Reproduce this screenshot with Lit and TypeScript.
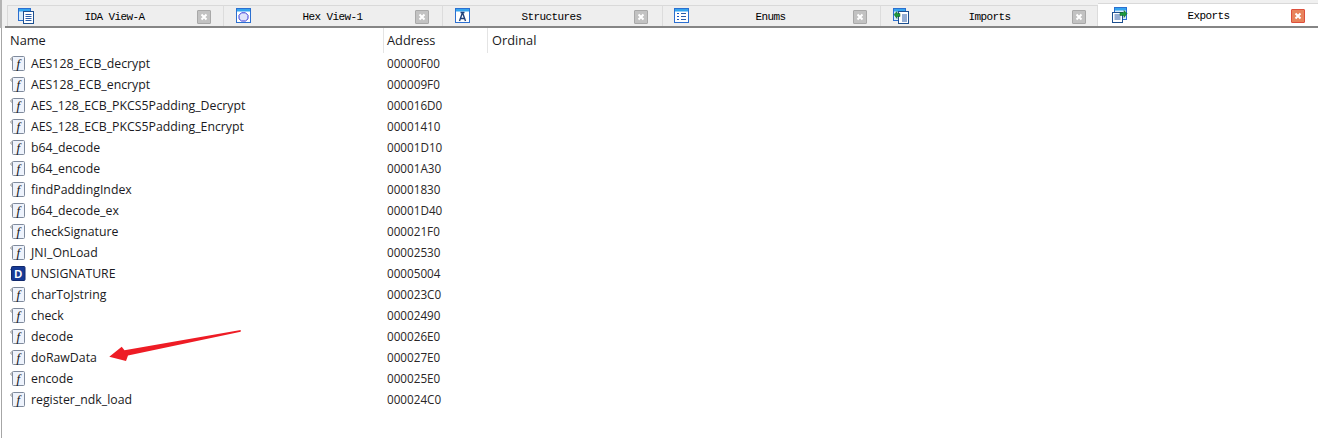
import { LitElement, html, css, svg } from "lit";
import { customElement } from "lit/decorators.js";

const winFrame = svg`
  <rect x="0.5" y="0.5" width="14" height="14" fill="#fff" stroke="#2b6fd0"/>
  <rect x="1" y="1" width="13" height="2.5" fill="#35a4ee"/>`;

const tabIcons = [
  svg`<rect x="0.5" y="0.5" width="12" height="12" fill="#d8ecfb" stroke="#2b6fd0"/>
      <rect x="1" y="1" width="11" height="2.5" fill="#35a4ee"/>
      <rect x="5.5" y="3.5" width="10" height="12" fill="#fff" stroke="#1d4f8f"/>
      <path d="M7.5 6.5h6M7.5 8.5h6M7.500 10.500h6M7.500 12.500h6" stroke="#2a5da8" fill="none"/>`,
  svg`${winFrame}<path d="M5.500 4.800h4l2.500 2.500v3.500l-2.500 2.200h-4L3 10.800V7.300z" fill="#dfe4fb" stroke="#3a3ad8"/>`,
  svg`${winFrame}<path d="M5.500 4.500h4M7.500 4.500L4.500 13M7.500 4.500L10.500 13M5.500 10.500h4" stroke="#1d3f78" stroke-width="1.400" fill="none"/>`,
  svg`${winFrame}<path d="M3 5.500h2M3 8.500h2M3 11.500h2" stroke="#1d55c0" fill="none"/><path d="M7 5.500h5M7 8.500h5M7 11.500h5" stroke="#2a5da8" fill="none"/>`,
  svg`<rect x="0.500" y="0.500" width="12" height="12" fill="#d8ecfb" stroke="#2b6fd0"/>
      <rect x="1" y="1" width="11" height="2.500" fill="#35a4ee"/>
      <rect x="5.500" y="3.500" width="10" height="12" fill="#fff" stroke="#1d4f8f"/>
      <path d="M9 7h5M9 9h5M9 11h5M9 13h5" stroke="#2a5da8" fill="none"/>
      <path d="M1 6.500l3-3v2h3v3H4v2z" fill="#1e9a3c" stroke="#0a5a1c" stroke-width="0.500"/>`,
  svg`<rect x="2.500" y="0.500" width="12" height="12" fill="#d8ecfb" stroke="#2b6fd0"/>
      <rect x="3" y="1" width="11" height="2.500" fill="#35a4ee"/>
      <rect x="0.500" y="5.500" width="10" height="10" fill="#fff" stroke="#1d4f8f"/>
      <path d="M2.500 8h6M2.500 10h6M2.500 12h6" stroke="#2a5da8" fill="none"/>
      <path d="M15 6.500l-3-3v2H8v3h4v2z" fill="#1e9a3c" stroke="#0a5a1c" stroke-width="0.500"/>`,
];

const tabs = [
  { label: "IDA View-A", w: 217, icon: 10, close: 12 },
  { label: "Hex View-1", w: 219, icon: 12, close: 13 },
  { label: "Structures", w: 220, icon: 12, close: 14 },
  { label: "Enums", w: 218, icon: 11, close: 13 },
  { label: "Imports", w: 217, icon: 12, close: 11 },
  { label: "Exports", w: 220, icon: 14, close: 13 },
];

const rows: [string, string, string][] = [
  ["f", "AES128_ECB_decrypt", "00000F00"],
  ["f", "AES128_ECB_encrypt", "000009F0"],
  ["f", "AES_128_ECB_PKCS5Padding_Decrypt", "000016D0"],
  ["f", "AES_128_ECB_PKCS5Padding_Encrypt", "00001410"],
  ["f", "b64_decode", "00001D10"],
  ["f", "b64_encode", "00001A30"],
  ["f", "findPaddingIndex", "00001830"],
  ["f", "b64_decode_ex", "00001D40"],
  ["f", "checkSignature", "000021F0"],
  ["f", "JNI_OnLoad", "00002530"],
  ["D", "UNSIGNATURE", "00005004"],
  ["f", "charToJstring", "000023C0"],
  ["f", "check", "00002490"],
  ["f", "decode", "000026E0"],
  ["f", "doRawData", "000027E0"],
  ["f", "encode", "000025E0"],
  ["f", "register_ndk_load", "000024C0"],
];

@customElement("app-root")
export class AppRoot extends LitElement {
  static styles = css`
    :host {
      display: block;
      width: 1318px;
      height: 438px;
      position: relative;
      overflow: hidden;
      background: #fff;
      font-family: "Open Sans", "Noto Sans", sans-serif;
      color: #1a1a22;
    }
    .top {
      height: 28px;
      box-sizing: border-box;
      background: #f0f0f0;
      padding-left: 2px;
      border-left: 2px solid #b4b4b4;
    }
    .bar {
      height: 28px;
      box-sizing: border-box;
      margin-left: 1px;
      padding-left: 2px;
      display: flex;
      align-items: flex-end;
      border-bottom: 2px solid #858585;
    }
    .tab {
      height: 21px;
      box-sizing: border-box;
      border-top: 1px solid #d9d9d9;
      border-right: 1px solid #dcdcdc;
      background: #eeeeee;
      display: grid;
      grid-template-columns: 1fr auto 1fr;
      align-items: center;
      flex: none;
    }
    .tab:first-child {
      border-left: 1px solid #d9d9d9;
    }
    .tab.active {
      height: 23px;
      background: #fff;
      border-right: 0;
    }
    .icon {
      width: 16px;
      height: 16px;
      margin-top: -1px;
      justify-self: start;
    }
    .active .icon {
      margin-top: 0;
    }
    .label {
      font-family: "Liberation Mono", monospace;
      font-size: 11px;
      letter-spacing: -0.6px;
      color: #000;
      margin-top: 1px;
    }
    .close {
      width: 14px;
      height: 14px;
      box-sizing: border-box;
      justify-self: end;
      background: #c2c2c2;
      border: 1px solid #a8a8a8;
      border-radius: 1px;
      margin-top: 1px;
      display: flex;
      align-items: center;
      justify-content: center;
    }
    .active .close {
      background: #e8845c;
      border-color: #dd4f3c;
    }
    .close svg {
      width: 8px;
      height: 8px;
    }
    .edge {
      position: absolute;
      left: 1px;
      top: 28px;
      bottom: 0;
      width: 1px;
      background: #a6a6a6;
    }
    .head {
      display: grid;
      grid-template-columns: 384px 104px 1fr;
      height: 25px;
    }
    .head div {
      line-height: 25px;
      font-size: 12.8px;
      box-sizing: border-box;
      border-right: 1px solid #e4e4e4;
      padding-left: 10px;
    }
    .head div:nth-child(2) {
      padding-left: 3px;
    }
    .head div:nth-child(3) {
      padding-left: 4px;
      border-right: 0;
    }
    .row {
      display: grid;
      grid-template-columns: 383px 1fr;
      height: 21px;
      box-sizing: border-box;
      padding-bottom: 1px;
      align-items: center;
    }
    .name {
      display: flex;
      align-items: center;
      gap: 5px;
      padding-left: 10px;
      font-size: 12.3px;
    }
    .name svg {
      width: 16px;
      height: 17px;
      flex: none;
    }
    .addr {
      padding-left: 4px;
      font-size: 11.7px;
      color: #2a2626;
    }
    .arrow {
      position: absolute;
      left: 0;
      top: 0;
      width: 1318px;
      height: 438px;
      pointer-events: none;
    }
  `;

  private fnIcon(kind: string) {
    if (kind === "D") {
      return html`<svg viewBox="0 -1 16 17">
        <path d="M2 1.500L0 3.500 2 5.500z" fill="#3f68a8"/>
        <rect x="1.500" y="0.500" width="13.500" height="14" rx="1" fill="#163a96" stroke="#10286c"/>
        <text x="8.200" y="11.500" text-anchor="middle" font-size="11" font-weight="700"
          font-family="Liberation Sans" fill="#fff">D</text>
      </svg>`;
    }
    return html`<svg viewBox="0 -1 16 17">
      <path d="M3 0.500L0.500 3 3 5.500" fill="none" stroke="#8a8a8a"/>
      <rect x="2.500" y="0.500" width="12" height="14" rx="1" fill="#eef3fc" stroke="#7f8a9c"/>
      <text x="8.300" y="11.500" text-anchor="middle" font-size="13" font-style="italic"
        font-family="Liberation Serif" fill="#111">f</text>
    </svg>`;
  }

  render() {
    return html`
      <div class="top">
        <div class="bar">
          ${tabs.map(
            (t, i) => html`<div
              class="tab ${i === 5 ? "active" : ""}"
              style="width:${t.w}px;padding:0 ${t.close}px 0 ${t.icon}px"
            >
              <svg class="icon" viewBox="0 0 16 16">${tabIcons[i]}</svg>
              <span class="label">${t.label}</span>
              <span class="close"
                ><svg viewBox="0 0 8 8">
                  <path d="M1.500 1.500l5 5M6.500 1.500l-5 5" stroke="#fff" stroke-width="2" /></svg
              ></span>
            </div>`
          )}
        </div>
      </div>
      <div class="edge"></div>
      <div class="head">
        <div>Name</div>
        <div>Address</div>
        <div>Ordinal</div>
      </div>
      <div class="rows">
        ${rows.map(
          ([k, n, a]) => html`<div class="row">
            <div class="name">${this.fnIcon(k)}<span>${n}</span></div>
            <div class="addr">${a}</div>
          </div>`
        )}
      </div>
      <svg class="arrow" viewBox="0 0 1318 438">
        <polygon
          points="109.300,356.700 121.700,346.700 124.500,350.200 240.700,330 240.700,331.800 128,355.600 126,361"
          fill="#ee1c25"
        />
      </svg>
    `;
  }
}
